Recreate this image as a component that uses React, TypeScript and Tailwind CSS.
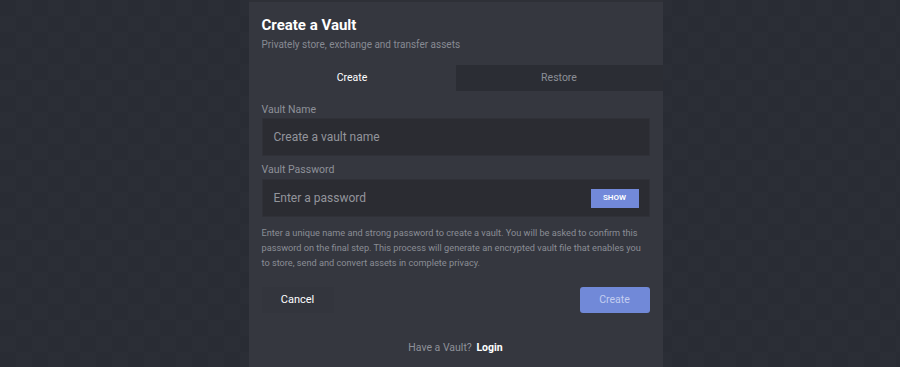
import React from 'react'

export default function App() {
  return (
    <div
      className="w-[900px] h-[367px] overflow-hidden flex justify-center bg-[#292c34] bg-[conic-gradient(#2b2e36_25%,#292c34_0_50%,#2b2e36_0_75%,#292c34_0)] bg-[length:32px_32px]"
      style={{ fontFamily: 'Roboto, "Noto Sans", sans-serif' }}
    >
      <div className="ml-[11px] w-[414px] h-full bg-[#35373f] border-t-2 border-[#2e3037] flex flex-col">
        {/* Header */}
        <div className="px-[13px] pt-[13px]">
          <h1 className="text-[15px] leading-[20px] font-bold text-white">Create a Vault</h1>
          <p className="mt-[3px] text-[10px] leading-[14px] text-[#878a93]">
            Privately store, exchange and transfer assets
          </p>
        </div>

        {/* Tabs */}
        <div className="mt-[13px] flex h-[26px]">
          <button className="w-[207px] text-[10.5px] text-white">Create</button>
          <button className="flex-1 bg-[#2b2d34] text-[10.5px] text-[#8c8f97]">Restore</button>
        </div>

        {/* Form */}
        <div className="px-[13px] pt-[12px]">
          <label className="block text-[10.5px] leading-[14px] text-[#8e9199]">Vault Name</label>
          <div className="mt-[1px] h-[38px] bg-[#2b2c32] border border-[#303138] flex items-center px-[11px]">
            <span className="text-[12px] text-[#93959c]">Create a vault name</span>
          </div>

          <label className="mt-[7px] block text-[10.5px] leading-[14px] text-[#8e9199]">Vault Password</label>
          <div className="mt-[2px] h-[38px] bg-[#2b2c32] border border-[#303138] flex items-center justify-between pl-[11px] pr-[10px]">
            <span className="text-[12px] text-[#93959c]">Enter a password</span>
            <span className="w-[48px] h-[19px] bg-[#7289da] flex items-center justify-center text-[8px] font-semibold text-white">
              SHOW
            </span>
          </div>

          <p className="mt-[8px] text-[9.2px] leading-[15px] text-[#8a8d95]">
            Enter a unique name and strong password to create a vault. You will be asked to confirm this
            password on the final step. This process will generate an encrypted vault file that enables you
            to store, send and convert assets in complete privacy.
          </p>

          {/* Actions */}
          <div className="mt-[17px] flex items-center justify-between">
            <button className="w-[72px] h-[26px] bg-[#33353d] text-[11px] text-white">Cancel</button>
            <button className="w-[70px] h-[26px] rounded-[3px] bg-[#7189d8] text-[10.5px] text-[#c3cdf0]">
              Create
            </button>
          </div>
        </div>

        <p className="mt-[27px] text-center text-[10.5px] text-[#8e9199]">
          Have a Vault? <span className="ml-[2px] font-bold text-white">Login</span>
        </p>
      </div>
    </div>
  )
}
